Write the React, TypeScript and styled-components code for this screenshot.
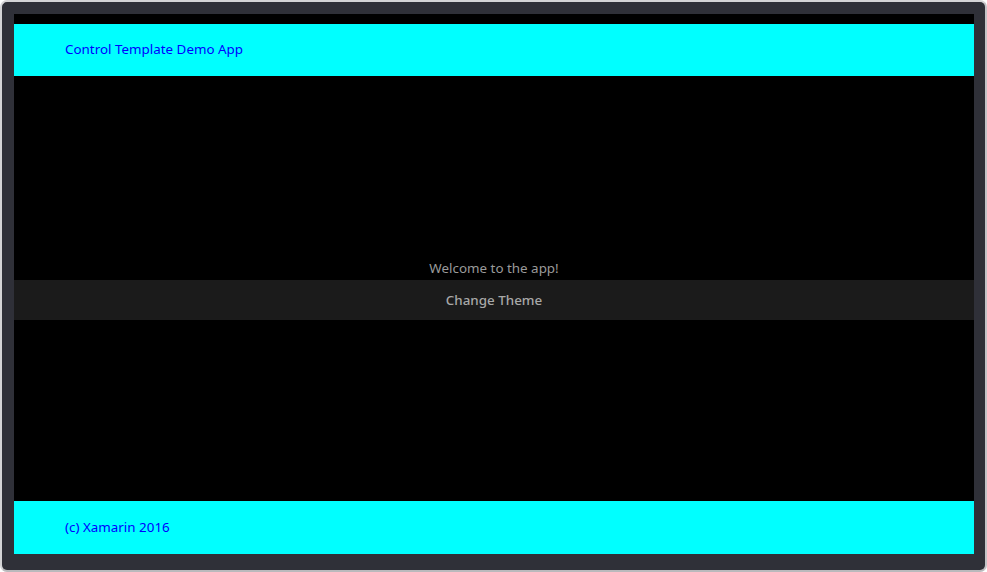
import React from "react";
import styled, { createGlobalStyle } from "styled-components";

const Global = createGlobalStyle`
  html, body { margin: 0; padding: 0; background: #ffffff; }
  body { font-family: "Noto Sans", "DejaVu Sans", sans-serif; }
`;

const Frame = styled.div`
  box-sizing: border-box;
  width: 987px;
  height: 572px;
  border-radius: 7px;
  border: 2px solid #d4d4d6;
  border-bottom-color: #b9b9bc;
  border-right-color: #c4c4c7;
  background: #2f3038;
  padding: 12px 11px 16px 12px;
  display: flex;
`;

const Screen = styled.div`
  flex: 1;
  background: #000000;
  display: flex;
  flex-direction: column;
  padding-top: 10px;
`;

const Bar = styled.div<{ $h: number; $lift: number }>`
  box-sizing: border-box;
  height: ${(p) => p.$h}px;
  background: #00ffff;
  display: flex;
  align-items: center;
  padding-left: 51px;
  padding-bottom: ${(p) => p.$lift}px;
  color: #0000ff;
  font-size: 13.4px;
`;

const Body = styled.div`
  flex: 1;
  display: flex;
  flex-direction: column;
  justify-content: center;
  padding-bottom: 2px;
`;

const Welcome = styled.div`
  text-align: center;
  color: #9a9a9a;
  font-size: 13.4px;
  line-height: 24px;
`;

const ThemeButton = styled.button`
  height: 40px;
  border: none;
  background: #1b1b1b;
  color: #a8a8a8;
  font-family: "Noto Sans", "DejaVu Sans", sans-serif;
  font-size: 13.4px;
  font-weight: 500;
  cursor: pointer;
`;

export default function App() {
  return (
    <>
      <Global />
      <Frame>
        <Screen>
          <Bar $h={52} $lift={3}>Control Template Demo App</Bar>
          <Body>
            <Welcome>Welcome to the app!</Welcome>
            <ThemeButton>Change Theme</ThemeButton>
          </Body>
          <Bar $h={53} $lift={2}>(c) Xamarin 2016</Bar>
        </Screen>
      </Frame>
    </>
  );
}
